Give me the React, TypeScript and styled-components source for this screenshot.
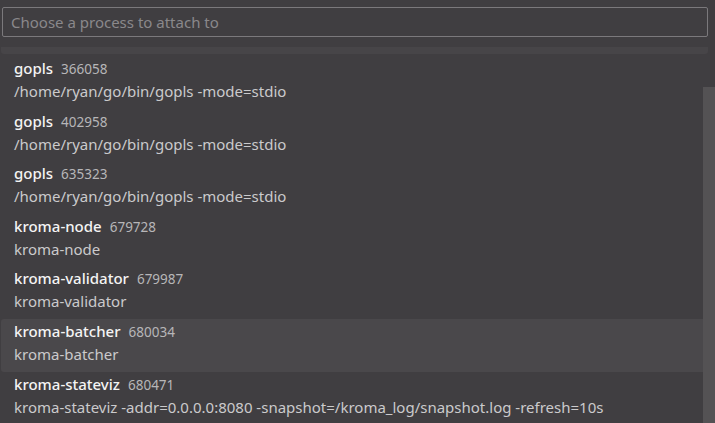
import React from "react";
import styled, { createGlobalStyle } from "styled-components";

const GlobalStyle = createGlobalStyle`
  html, body {
    margin: 0;
    padding: 0;
    background: #403e41;
    overflow: hidden;
  }
  body {
    font-family: "Noto Sans", "Open Sans", sans-serif;
  }
`;

const Picker = styled.div`
  position: relative;
  width: 715px;
  height: 423px;
  background: #403e41;
  display: flex;
  flex-direction: column;
  overflow: hidden;
`;

const InputWrap = styled.div`
  padding: 7px 7px 0 2px;
`;

const SearchInput = styled.input`
  box-sizing: border-box;
  width: 100%;
  height: 30px;
  background: #403e41;
  border: 1px solid #7b797c;
  border-radius: 2px;
  padding: 0 8px;
  color: #e0e0e0;
  font-family: inherit;
  font-size: 15px;
  outline: none;

  &::placeholder {
    color: #8a888b;
  }
`;

const ShadowBand = styled.div`
  margin: 10px 7px 0 1px;
  height: 7px;
  background: #474548;
  border-radius: 0 0 3px 3px;
`;

const List = styled.div`
  flex: 1;
  display: flex;
  flex-direction: column;
  padding: 2px 7px 0 1px;
  min-height: 0;
`;

const Row = styled.div<{ $active?: boolean }>`
  height: 52.6px;
  flex-shrink: 0;
  box-sizing: border-box;
  padding: 3px 13px 0;
  display: flex;
  flex-direction: column;
  gap: 3px;
  border-radius: 3px;
  background: ${(p) => (p.$active ? "#4a484b" : "transparent")};
`;

const TitleLine = styled.div`
  display: flex;
  align-items: baseline;
  gap: 8px;
  line-height: 19px;
  white-space: nowrap;
`;

const Name = styled.span`
  color: #f4f4f4;
  font-size: 15px;
  font-weight: 500;
`;

const Pid = styled.span`
  color: #b7b6b8;
  font-size: 13.5px;
`;

const Detail = styled.div`
  color: #cbcacc;
  font-size: 15px;
  line-height: 19px;
  white-space: nowrap;
`;

/* scrollbar thumb sits over the list's right edge */
const ScrollThumb = styled.div`
  position: absolute;
  right: 0;
  top: 87px;
  bottom: 0;
  width: 12px;
  background: #545254;
`;

const processes = [
  { name: "gopls", pid: "366058", detail: "/home/ryan/go/bin/gopls -mode=stdio" },
  { name: "gopls", pid: "402958", detail: "/home/ryan/go/bin/gopls -mode=stdio" },
  { name: "gopls", pid: "635323", detail: "/home/ryan/go/bin/gopls -mode=stdio" },
  { name: "kroma-node", pid: "679728", detail: "kroma-node" },
  { name: "kroma-validator", pid: "679987", detail: "kroma-validator" },
  { name: "kroma-batcher", pid: "680034", detail: "kroma-batcher" },
  {
    name: "kroma-stateviz",
    pid: "680471",
    detail:
      "kroma-stateviz -addr=0.0.0.0:8080 -snapshot=/kroma_log/snapshot.log -refresh=10s",
  },
];

const App = () => {
  return (
    <Picker>
      <GlobalStyle />
      <InputWrap>
        <SearchInput placeholder="Choose a process to attach to" />
      </InputWrap>
      <ShadowBand />
      <List>
        {processes.map((p, i) => (
          <Row key={p.pid} $active={i === 5}>
            <TitleLine>
              <Name>{p.name}</Name>
              <Pid>{p.pid}</Pid>
            </TitleLine>
            <Detail>{p.detail}</Detail>
          </Row>
        ))}
      </List>
      <ScrollThumb />
    </Picker>
  );
};

export default App;
